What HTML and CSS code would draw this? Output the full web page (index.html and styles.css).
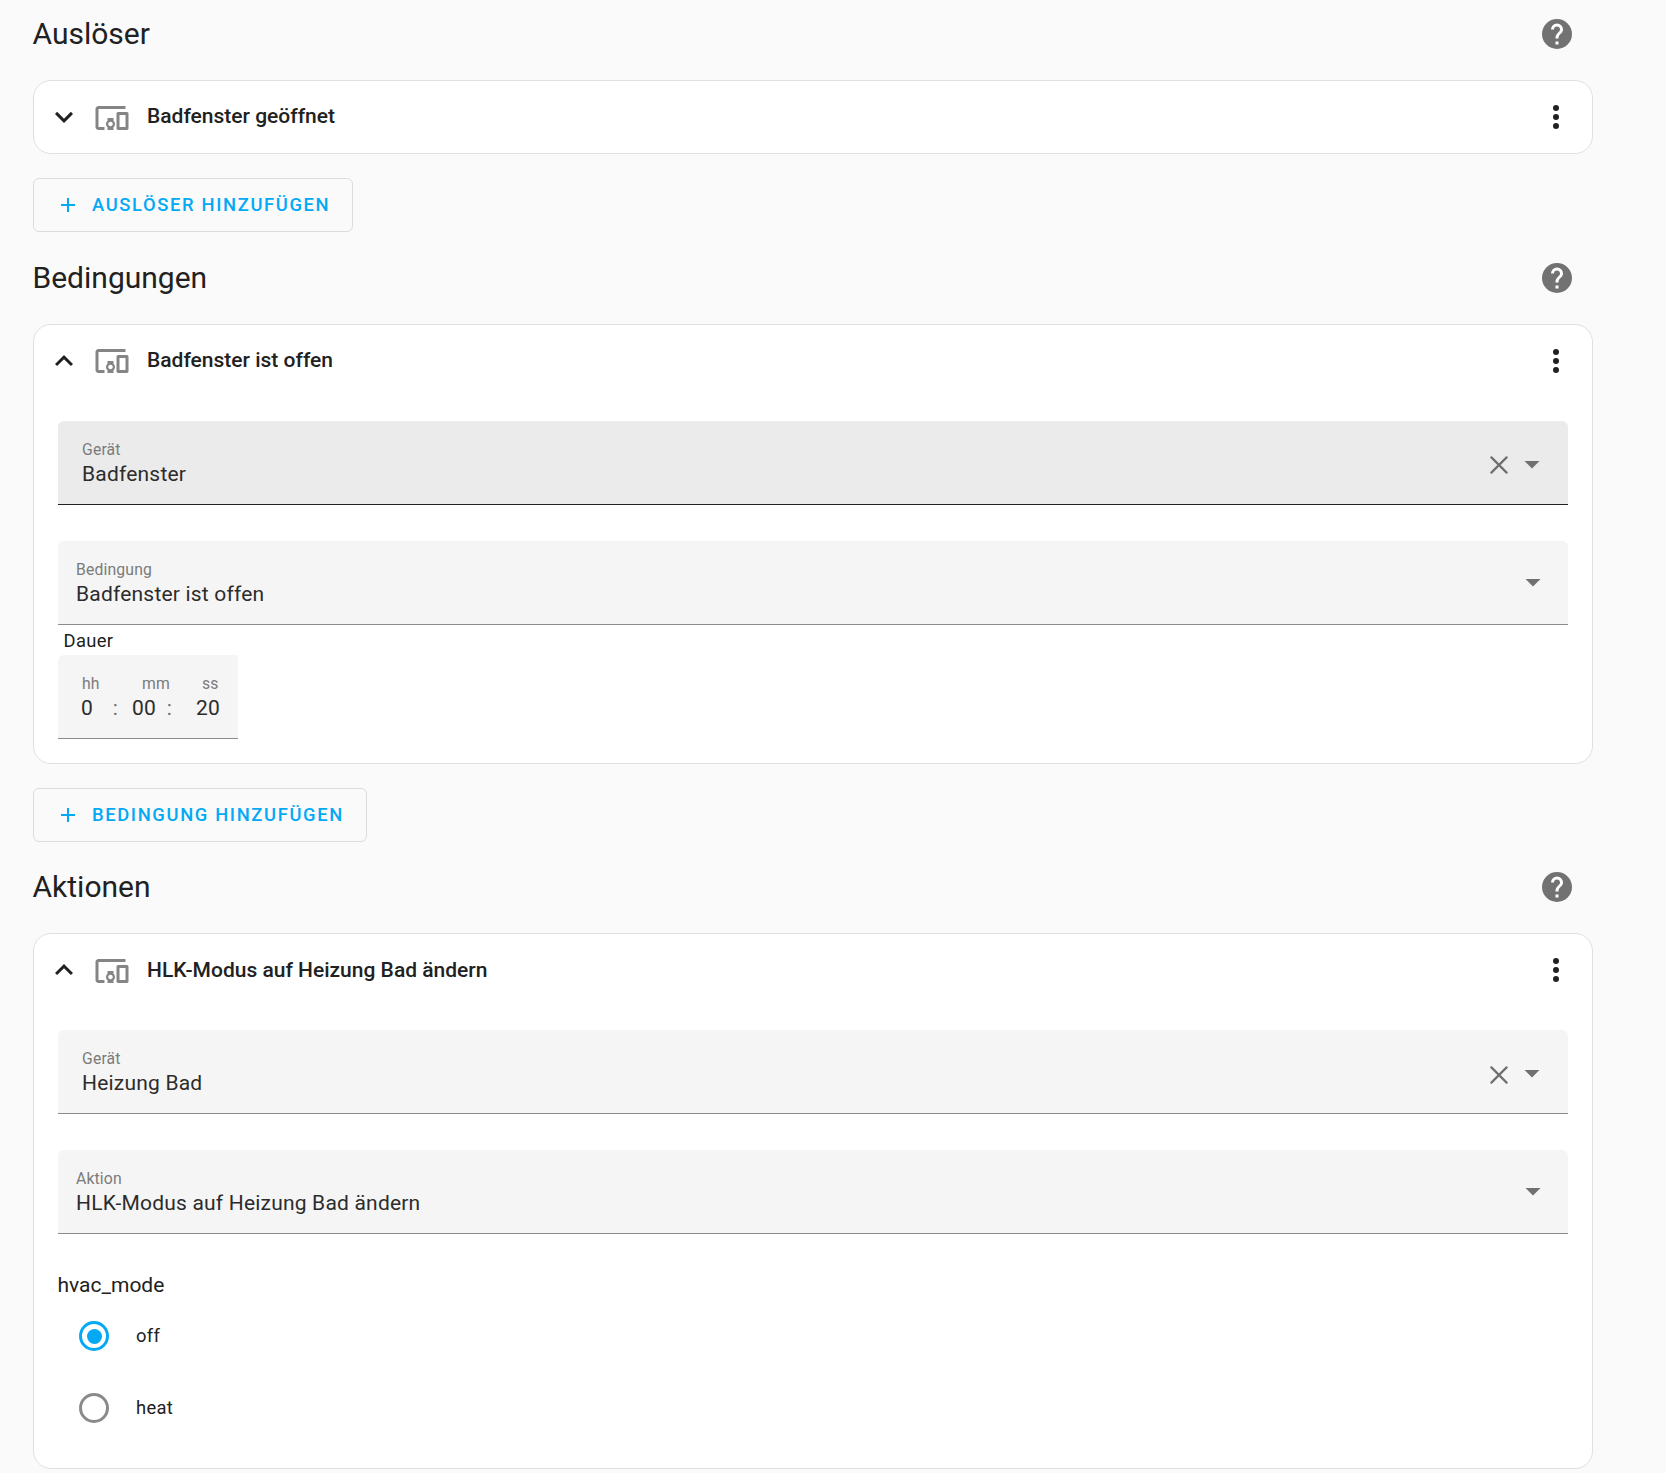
FILE: index.html
```html
<!DOCTYPE html>
<html lang="de">
<head>
<meta charset="utf-8">
<title>Automatisierung</title>
<link rel="stylesheet" href="styles.css">
</head>
<body>
<svg class="sprite" aria-hidden="true">
  <symbol id="help" viewBox="0 0 24 24"><circle cx="12" cy="12" r="10"/><path class="mark" d="M15.07,11.25L14.17,12.17C13.45,12.89 13,13.5 13,15H11V14.5C11,13.39 11.45,12.39 12.17,11.67L13.41,10.41C13.78,10.05 14,9.55 14,9C14,7.89 13.1,7 12,7A2,2 0 0,0 10,9H8A4,4 0 0,1 12,5A4,4 0 0,1 16,9C16,9.88 15.64,10.67 15.07,11.25M13,19H11V17H13Z"/></symbol>
  <symbol id="down" viewBox="0 0 24 24"><path d="M7.41,8.58L12,13.17L16.59,8.58L18,10L12,16L6,10L7.41,8.58Z"/></symbol>
  <symbol id="up" viewBox="0 0 24 24"><path d="M7.41,15.41L12,10.83L16.59,15.41L18,14L12,8L6,14L7.41,15.41Z"/></symbol>
  <symbol id="devices" viewBox="0 0 24 24"><path d="M3 6H21V4H3C1.9 4 1 4.9 1 6V18C1 19.1 1.9 20 3 20H7V18H3V6M13 12H9V13.78C8.39 14.33 8 15.11 8 16C8 16.89 8.39 17.67 9 18.22V20H13V18.22C13.61 17.67 14 16.88 14 16S13.61 14.33 13 13.78V12M11 17.5C10.17 17.5 9.5 16.83 9.5 16S10.17 14.5 11 14.5 12.5 15.17 12.5 16 11.83 17.5 11 17.5M22 8H16C15.5 8 15 8.5 15 9V19C15 19.5 15.5 20 16 20H22C22.5 20 23 19.5 23 19V9C23 8.5 22.5 8 22 8M21 18H17V10H21V18Z"/></symbol>
  <symbol id="dots" viewBox="0 0 24 24"><circle cx="12" cy="6" r="2"/><circle cx="12" cy="12" r="2"/><circle cx="12" cy="18" r="2"/></symbol>
  <symbol id="plus" viewBox="0 0 24 24"><path d="M19,13H13V19H11V13H5V11H11V5H13V11H19V13Z"/></symbol>
  <symbol id="caret" viewBox="0 0 24 24"><path d="M7,10L12,15L17,10H7Z"/></symbol>
  <symbol id="clear" viewBox="0 0 18 18"><path class="cross" d="M1.4,1.4L16.6,16.6M16.6,1.4L1.4,16.6"/></symbol>
</svg>
<main class="page">
  <section class="section">
    <header class="section-head"><h2>Auslöser</h2><svg class="icon help"><use href="#help"/></svg></header>
    <article class="card">
      <div class="card-head">
        <svg class="icon"><use href="#down"/></svg>
        <svg class="icon device low"><use href="#devices"/></svg>
        <h3>Badfenster geöffnet</h3>
        <svg class="icon menu"><use href="#dots"/></svg>
      </div>
    </article>
    <button class="add"><svg class="plus"><use href="#plus"/></svg><span>Auslöser hinzufügen</span></button>
  </section>

  <section class="section">
    <header class="section-head"><h2>Bedingungen</h2><svg class="icon help"><use href="#help"/></svg></header>
    <article class="card conditions">
      <div class="card-head">
        <svg class="icon"><use href="#up"/></svg>
        <svg class="icon device"><use href="#devices"/></svg>
        <h3>Badfenster ist offen</h3>
        <svg class="icon menu"><use href="#dots"/></svg>
      </div>
      <div class="fields">
        <div class="field combo hover">
          <div class="text"><span class="label">Gerät</span><span class="value">Badfenster</span></div>
          <svg class="clear"><use href="#clear"/></svg>
          <svg class="icon caret"><use href="#caret"/></svg>
        </div>
        <div class="field">
          <div class="text"><span class="label">Bedingung</span><span class="value">Badfenster ist offen</span></div>
          <svg class="icon caret"><use href="#caret"/></svg>
        </div>
      </div>
      <div class="duration-label">Dauer</div>
      <div class="duration">
        <div class="unit hours"><span class="label">hh</span><span class="value">0<i>:</i></span></div>
        <div class="unit minutes"><span class="label">mm</span><span class="value">00<i>:</i></span></div>
        <div class="unit seconds"><span class="label">ss</span><span class="value">20</span></div>
      </div>
    </article>
    <button class="add"><svg class="plus"><use href="#plus"/></svg><span>Bedingung hinzufügen</span></button>
  </section>

  <section class="section actions">
    <header class="section-head"><h2>Aktionen</h2><svg class="icon help"><use href="#help"/></svg></header>
    <article class="card">
      <div class="card-head">
        <svg class="icon"><use href="#up"/></svg>
        <svg class="icon device low"><use href="#devices"/></svg>
        <h3 class="low">HLK-Modus auf Heizung Bad ändern</h3>
        <svg class="icon menu"><use href="#dots"/></svg>
      </div>
      <div class="fields">
        <div class="field combo">
          <div class="text"><span class="label">Gerät</span><span class="value">Heizung Bad</span></div>
          <svg class="clear low"><use href="#clear"/></svg>
          <svg class="icon caret"><use href="#caret"/></svg>
        </div>
        <div class="field">
          <div class="text"><span class="label">Aktion</span><span class="value">HLK-Modus auf Heizung Bad ändern</span></div>
          <svg class="icon caret"><use href="#caret"/></svg>
        </div>
      </div>
      <div class="mode">hvac_mode</div>
      <div class="option"><span class="radio checked"></span><span class="option-text">off</span></div>
      <div class="option"><span class="radio"></span><span class="option-text">heat</span></div>
    </article>
  </section>
</main>
</body>
</html>
```
FILE: styles.css
```css
* { box-sizing: border-box; }
body {
  margin: 0;
  background: #fafafa;
  color: #212121;
  font-family: Roboto, "Liberation Sans", sans-serif;
  font-size: 21px;
}
h2, h3 { margin: 0; }
.sprite { display: block; width: 0; height: 0; }
.page { width: 1593px; height: 1473px; padding-left: 33px; overflow: hidden; }
.section { display: flex; flex-direction: column; align-items: stretch; margin-bottom: 12px; }
.section.actions { margin: -1px 0 0; }
.section-head {
  display: flex;
  align-items: center;
  justify-content: space-between;
  height: 80px;
  padding: 0 18px 12px 0;
}
.section-head h2 { margin-left: -0.5px; font-size: 30px; font-weight: 400; line-height: 42px; }
.icon { flex: none; width: 36px; height: 36px; fill: currentColor; }
.help { color: #727272; }
.mark { fill: #fff; }
.card { background: #fff; border: 1px solid #e0e0e0; border-radius: 18px; }
.card-head { display: flex; align-items: center; height: 72px; padding: 0 18px 0 12px; }
.card-head .device { margin: 0 17px 0 12px; color: #858585; }
.card-head h3 { font-size: 21px; font-weight: 500; line-height: 32px; flex: 1; margin-top: -2px; }
.card-head .device.low { margin-top: 2px; }
.card-head h3.low { margin-top: 0; }
.add {
  display: flex;
  align-items: center;
  align-self: flex-start;
  gap: 12px;
  height: 54px;
  margin-top: 24px;
  padding: 0 22px;
  border: 1px solid #dcdcdc;
  border-radius: 6px;
  background: none;
  color: #03a9f4;
  font: 500 18.375px Roboto, sans-serif;
  letter-spacing: 1.64px;
  text-transform: uppercase;
}
.add span { padding-bottom: 2px; }
.plus { width: 24px; height: 24px; fill: currentColor; }
.conditions { height: 440px; }
.fields { display: flex; flex-direction: column; gap: 36px; padding: 24px 24px 0; }
.field {
  display: flex;
  align-items: flex-start;
  height: 84px;
  padding: 0 17.5px 0 18px;
  border-bottom: 1px solid #8c8c8c;
  border-radius: 6px 6px 0 0;
  background: #f5f5f5;
}
.field.combo { padding: 0 18px 0 24px; }
.field.hover { background: #ebebeb; border-color: #212121; }
.text { flex: 1; padding-top: 18px; }
.label, .value { display: block; }
.label { color: #7b7b7b; font-size: 15.75px; line-height: 21px; letter-spacing: 0.15px; }
.value { font-size: 21px; line-height: 28px; letter-spacing: 0.2px; color: #2c2c2c; }
.caret { margin-top: 23px; color: #707070; }
.combo .caret { margin-top: 25px; }
.clear { width: 18px; height: 18px; margin: 35px 6px 0 0; }
.clear.low { margin-top: 36px; }
.cross { fill: none; stroke: #6f6f6f; stroke-width: 2.2; stroke-linecap: round; }
.duration-label { height: 30px; padding: 4px 29.5px 0; font-size: 18.375px; line-height: 24px; letter-spacing: 0.33px; }
.duration {
  display: grid;
  grid-template-columns: repeat(3, 60px);
  width: 180px;
  height: 84px;
  margin-left: 24px;
  padding-top: 18px;
  border-bottom: 1px solid #8c8c8c;
  border-radius: 6px 0 0 0;
  background: #f5f5f5;
}
.unit .label { padding-left: 24px; }
.unit .value { display: flex; justify-content: space-between; }
.unit i { font-style: normal; color: #707070; }
.hours .value { padding: 0 0 0 23px; }
.minutes .value { padding: 0 6px 0 14px; }
.seconds .value { padding-left: 18px; }
.mode { height: 68px; padding: 35px 23.5px 0; line-height: 32px; }
.option { display: flex; align-items: center; gap: 27px; height: 72px; padding-left: 45px; font-size: 18.375px; letter-spacing: 0.33px; }
.option-text { padding-bottom: 2px; }
.mode + .option { margin-top: -2px; }
.option:last-child { margin-bottom: 24px; }
.radio { display: grid; place-items: center; width: 30px; height: 30px; border: 3px solid #8a8a8a; border-radius: 50%; }
.radio.checked { border-color: #03a9f4; }
.radio.checked::after { content: ""; width: 15px; height: 15px; border-radius: 50%; background: #03a9f4; }
```
